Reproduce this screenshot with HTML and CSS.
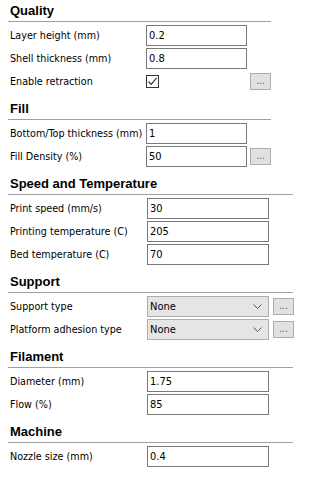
FILE: index.html
```html
<!DOCTYPE html>
<html>
<head>
<meta charset="utf-8">
<link rel="stylesheet" href="styles.css">
</head>
<body>
<div class="panel">
  <section class="sec narrow">
    <div class="head">Quality</div>
    <div class="rows">
      <div class="row"><span class="lbl">Layer height (mm)</span><div class="field">0.2</div></div>
      <div class="row"><span class="lbl">Shell thickness (mm)</span><div class="field">0.8</div></div>
      <div class="row"><span class="lbl">Enable retraction</span><div class="cell"><span class="check"><svg width="11" height="11" viewBox="0 0 11 11"><path d="M1.5 5.5 L4.2 8.3 L9.6 1.8" fill="none" stroke="#333" stroke-width="1.2"/></svg></span></div><div class="btn">...</div></div>
    </div>
  </section>
  <section class="sec narrow">
    <div class="head">Fill</div>
    <div class="rows">
      <div class="row"><span class="lbl">Bottom/Top thickness (mm)</span><div class="field">1</div></div>
      <div class="row"><span class="lbl">Fill Density (%)</span><div class="field">50</div><div class="btn">...</div></div>
    </div>
  </section>
  <section class="sec wide">
    <div class="head">Speed and Temperature</div>
    <div class="rows">
      <div class="row"><span class="lbl">Print speed (mm/s)</span><div class="field">30</div></div>
      <div class="row"><span class="lbl">Printing temperature (C)</span><div class="field">205</div></div>
      <div class="row"><span class="lbl">Bed temperature (C)</span><div class="field">70</div></div>
    </div>
  </section>
  <section class="sec wide">
    <div class="head">Support</div>
    <div class="rows">
      <div class="row"><span class="lbl">Support type</span><div class="select"><span>None</span><svg width="9" height="5" viewBox="0 0 9 5"><path d="M0.5 0.5 L4.5 4.5 L8.5 0.5" fill="none" stroke="#555" stroke-width="1"/></svg></div><div class="btn">...</div></div>
      <div class="row"><span class="lbl">Platform adhesion type</span><div class="select"><span>None</span><svg width="9" height="5" viewBox="0 0 9 5"><path d="M0.5 0.5 L4.5 4.5 L8.5 0.5" fill="none" stroke="#555" stroke-width="1"/></svg></div><div class="btn">...</div></div>
    </div>
  </section>
  <section class="sec wide">
    <div class="head">Filament</div>
    <div class="rows">
      <div class="row"><span class="lbl">Diameter (mm)</span><div class="field">1.75</div></div>
      <div class="row"><span class="lbl">Flow (%)</span><div class="field">85</div></div>
    </div>
  </section>
  <section class="sec wide">
    <div class="head">Machine</div>
    <div class="rows">
      <div class="row"><span class="lbl">Nozzle size (mm)</span><div class="field">0.4</div></div>
    </div>
  </section>
</div>
</body>
</html>
```
FILE: styles.css
```css
html, body {
  margin: 0;
  padding: 0;
  background: #ffffff;
}
body {
  font-family: "DejaVu Sans Condensed", "DejaVu Sans", sans-serif;
  font-stretch: condensed;
  font-size: 10.7px;
  color: #000;
}
.panel {
  padding-left: 8px;
  display: flex;
  flex-direction: column;
}
.sec {
  display: flex;
  flex-direction: column;
}
.sec + .sec {
  margin-top: 5px;
}
.narrow { width: 263px; }
.wide { width: 285px; }
.head {
  height: 22px;
  box-sizing: border-box;
  border-bottom: 1px solid #a0a0a0;
  padding-left: 2px;
  display: flex;
  align-items: flex-end;
  padding-bottom: 3px;
  font-family: "Liberation Sans", Arial, sans-serif;
  font-stretch: normal;
  font-weight: bold;
  font-size: 13px;
  line-height: 15px;
}
.rows {
  padding-top: 2px;
  padding-left: 2px;
  display: flex;
  flex-direction: column;
}
.row {
  height: 23px;
  display: grid;
  align-items: center;
}
.narrow .row {
  grid-template-columns: 133px 101px 21px;
  column-gap: 3px;
}
.wide .row {
  grid-template-columns: 133px 122px 21px;
  column-gap: 4px;
}
.lbl {
  white-space: nowrap;
  line-height: 14px;
}
.field {
  height: 21px;
  box-sizing: border-box;
  border: 1px solid #7a7a7a;
  background: #fff;
  padding: 0 2px;
  display: flex;
  align-items: center;
  line-height: 14px;
  font-size: 11px;
}
.cell {
  display: flex;
  align-items: center;
}
.check {
  width: 13px;
  height: 13px;
  box-sizing: border-box;
  border: 1px solid #333;
  background: #fff;
  display: flex;
  align-items: center;
  justify-content: center;
}
.btn {
  height: 17px;
  box-sizing: border-box;
  border: 1px solid #adadad;
  background: #e1e1e1;
  color: #555;
  font-size: 10px;
  display: flex;
  align-items: center;
  justify-content: center;
  line-height: 10px;
  padding-bottom: 2px;
}
.select {
  height: 21px;
  box-sizing: border-box;
  border: 1px solid #adadad;
  background: #e5e5e5;
  padding: 0 6px 0 2px;
  display: flex;
  align-items: center;
  justify-content: space-between;
  line-height: 14px;
  font-size: 11px;
}
```
